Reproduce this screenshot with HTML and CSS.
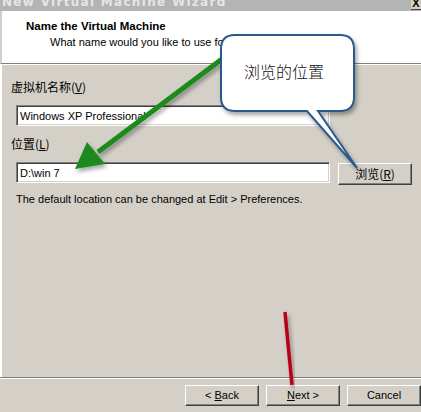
FILE: index.html
```html
<!DOCTYPE html>
<html lang="zh-CN">
<head>
  <meta charset="UTF-8">
  <title>New Virtual Machine Wizard</title>
  <link rel="stylesheet" href="styles.css">
</head>
<body>
  <div class="window">
    <div class="titlebar">
      <span class="title-text">New Virtual Machine Wizard</span>
      <span class="close-btn">X</span>
    </div>
    <div class="header">
      <div class="header-title">Name the Virtual Machine</div>
      <div class="header-sub">What name would you like to use for this virtual machine?</div>
    </div>
    <div class="content">
      <label class="field-label">虚拟机名称(<u>V</u>)</label>
      <div class="field-row">
        <div class="textbox">Windows XP Professional</div>
      </div>
      <label class="field-label second">位置(<u>L</u>)</label>
      <div class="field-row">
        <div class="textbox">D:\win 7</div>
        <div class="button browse">浏览(<u>R</u>)</div>
      </div>
      <p class="hint">The default location can be changed at Edit &gt; Preferences.</p>
    </div>
    <div class="footer">
      <div class="button">&lt; <u>B</u>ack</div>
      <div class="button"><u>N</u>ext &gt;</div>
      <div class="button">Cancel</div>
    </div>

    <svg class="annotations" width="421" height="412" viewBox="0 0 421 412">
      <defs>
        <filter id="shadow" x="-20%" y="-20%" width="150%" height="150%">
          <feDropShadow dx="2" dy="3" stdDeviation="2" flood-color="#000" flood-opacity="0.35"/>
        </filter>
      </defs>
      <!-- green arrow -->
      <g filter="url(#shadow)">
        <line x1="226" y1="56" x2="98" y2="152" stroke="#1b8a1b" stroke-width="5"/>
        <polygon points="75,169 87,142 105,164" fill="#1b8a1b"/>
      </g>
      <!-- red line -->
      <line x1="285" y1="312" x2="292" y2="385" stroke="#b8001a" stroke-width="3.5" filter="url(#shadow)"/>
      <!-- callout -->
      <path class="callout" filter="url(#shadow)"
        d="M235 35 H340 Q354 35 354 49 V97 Q354 111 340 111 H318 L357 168 L307 111 H235 Q221 111 221 97 V49 Q221 35 235 35 Z"/>
      <text class="callout-text" x="284" y="78" text-anchor="middle">浏览的位置</text>
    </svg>
  </div>
</body>
</html>
```

FILE: styles.css
```css
body {
  margin: 0;
  font-family: "Liberation Sans", Arial, sans-serif;
  font-size: 11px;
  color: #000;
}
.window {
  position: relative;
  width: 421px;
  height: 412px;
  overflow: hidden;
  background-color: #d4d0c8;
  display: flex;
  flex-direction: column;
}
.titlebar {
  height: 11px;
  background-color: #b4b4b4;
  display: flex;
  justify-content: space-between;
  overflow: hidden;
}
.title-text {
  margin: -5px 0 0 2px;
  font-family: "DejaVu Sans", sans-serif;
  font-weight: bold;
  font-size: 12px;
  letter-spacing: 1.3px;
  color: #e6e6e6;
  line-height: 14px;
}
.close-btn {
  width: 10px;
  height: 9px;
  background-color: #d4d0c8;
  border-bottom: 1px solid #404040;
  font-weight: bold;
  font-size: 11px;
  line-height: 6px;
  text-align: center;
  overflow: hidden;
}
.header {
  height: 53px;
  background-color: #fff;
  border-left: 2px solid #d4d0c8;
  border-bottom: 1px solid #808080;
  box-sizing: border-box;
  padding: 9px 0 0 24px;
}
.header-title {
  font-weight: bold;
  font-size: 11.5px;
  line-height: 13px;
}
.header-sub {
  margin: 3px 0 0 24px;
  line-height: 13px;
}
.content {
  flex: 1;
  border-top: 1px solid #fff;
  border-left: 2px solid #fff;
  padding: 15px 0 0 9px;
  display: flex;
  flex-direction: column;
}
.field-label {
  font-family: "Noto Sans CJK SC", sans-serif;
  font-size: 12px;
  line-height: 14px;
}
.field-label.second {
  margin-top: 11px;
}
.field-row {
  display: flex;
  gap: 8px;
  margin: 11px 0 0 5px;
}
.textbox {
  width: 314px;
  height: 21px;
  box-sizing: border-box;
  background-color: #fff;
  border-top: 1px solid #808080;
  border-left: 1px solid #808080;
  border-right: 1px solid #fff;
  border-bottom: 1px solid #fff;
  box-shadow: inset 1px 1px 0 #404040, inset -1px -1px 0 #d4d0c8;
  padding: 3px 0 0 3px;
  line-height: 14px;
}
.button {
  width: 74px;
  height: 22px;
  box-sizing: border-box;
  border-top: 1px solid #fff;
  border-left: 1px solid #fff;
  border-right: 1px solid #404040;
  border-bottom: 1px solid #404040;
  box-shadow: inset -1px -1px 0 #808080;
  text-align: center;
  line-height: 19px;
}
.browse {
  margin-top: 1px;
  font-family: "Noto Sans CJK SC", sans-serif;
  font-size: 12px;
}
.hint {
  margin: 8px 0 0 5px;
  line-height: 13px;
}
.footer {
  height: 35px;
  border-top: 1px solid #808080;
  box-shadow: inset 0 1px 0 #fff;
  display: flex;
  justify-content: flex-end;
  gap: 7px;
  padding-top: 7px;
  box-sizing: border-box;
}
.footer .button {
  height: 21px;
}
.annotations {
  position: absolute;
  top: 0;
  left: 0;
}
.callout {
  fill: #fff;
  stroke: #2b5a8c;
  stroke-width: 2;
}
.callout-text {
  font-family: "Noto Sans CJK SC", sans-serif;
  font-size: 16px;
  font-weight: 300;
  fill: #111;
}
```
